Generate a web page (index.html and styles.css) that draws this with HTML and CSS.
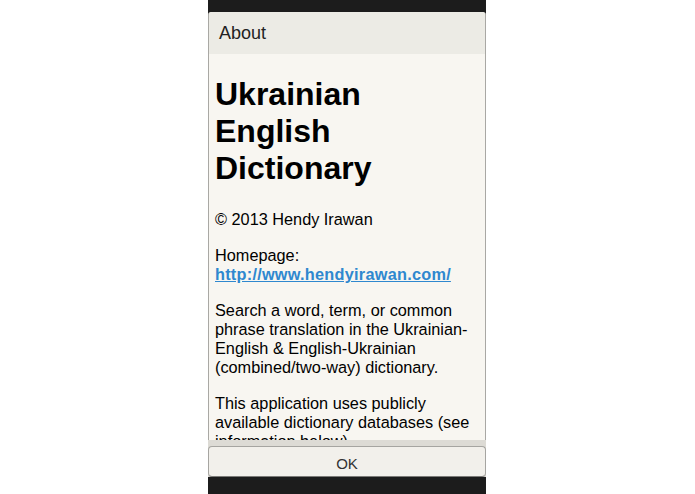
FILE: index.html
```html
<!DOCTYPE html>
<html lang="en">
<head>
    <meta charset="utf-8">
    <link rel="stylesheet" href="styles.css">
</head>
<body>
    <!--Phone screen-->
    <div class="screen">
        <!--Dialog-->
        <div class="dialog">
            <div class="dialog-title">About</div>
            <div class="dialog-body">
                <h1>Ukrainian English Dictionary</h1>
                <p>&copy; 2013 Hendy Irawan</p>
                <p>Homepage:<br><a href="#">http://www.hendyirawan.com/</a></p>
                <p>Search a word, term, or common phrase translation in the Ukrainian-English &amp; English-Ukrainian (combined/two-way) dictionary.</p>
                <p>This application uses publicly available dictionary databases (see information below).</p>
            </div>
            <div class="dialog-buttons">
                <button class="btn-ok">OK</button>
            </div>
        </div>
    </div>
</body>
</html>
```

FILE: styles.css
```css
html, body{
    margin: 0;
    padding: 0;
    background-color: #ffffff;
}
.screen{
    width: 278px;
    height: 494px;
    margin-left: 208px;
    padding-top: 12px;
    box-sizing: border-box;
    background-color: #1c1c1c;
}
.dialog{
    display: flex;
    flex-direction: column;
    height: 465px;
    background-color: #f8f6f1;
    border-left: 1px solid #a9a8a4;
    border-right: 1px solid #a9a8a4;
    border-radius: 3px 3px 0 0;
    font-family: "Liberation Sans", Arial, sans-serif;
    color: #000;
}
.dialog-title{
    height: 42px;
    flex: none;
    box-sizing: border-box;
    padding: 11px 0 0 10px;
    background-color: #ecebe5;
    border-radius: 3px 3px 0 0;
    font-size: 18px;
    color: #222;
}
.dialog-body{
    flex: 1;
    overflow: hidden;
    padding: 0 6px;
}
h1{
    font-size: 32px;
    line-height: 37px;
    margin: 22px 0 23px;
}
p{
    font-size: 16.3px;
    line-height: 18.8px;
    margin: 17.5px 0;
}
a{
    color: #2f88cf;
    font-weight: bold;
    letter-spacing: 0.25px;
    text-decoration: underline;
}
.dialog-buttons{
    flex: none;
    height: 37px;
    box-sizing: border-box;
    padding-top: 6px;
    background-color: #dddbd5;
    margin: 0 -1px;
}
.btn-ok{
    display: block;
    width: 100%;
    height: 31px;
    margin: 0;
    background-color: #f2f0eb;
    border: 1px solid #a6a5a1;
    border-bottom-color: #7b7a77;
    border-radius: 4px;
    font-family: "Liberation Sans", Arial, sans-serif;
    font-size: 15px;
    color: #333;
    padding: 3px 0 0;
}
```
